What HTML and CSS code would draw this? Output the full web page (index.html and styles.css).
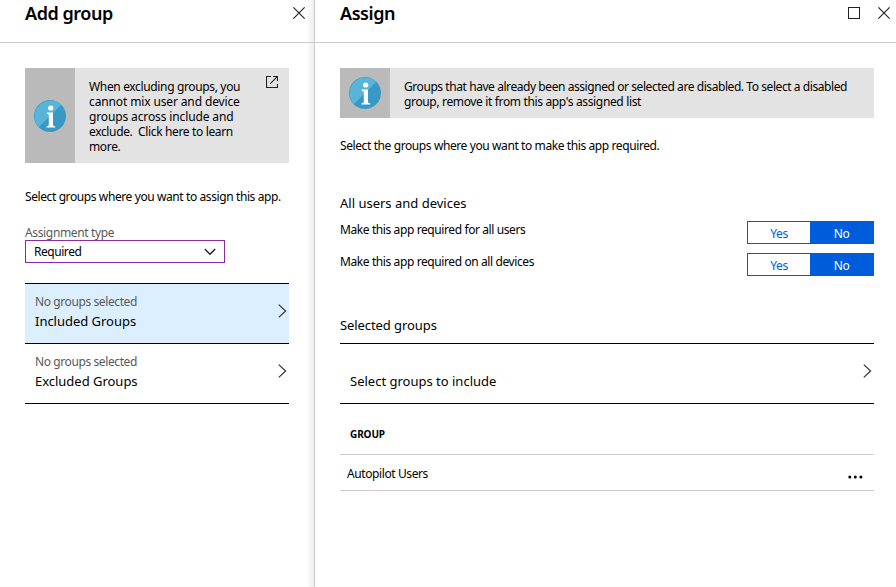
FILE: index.html
```html
<!DOCTYPE html>
<html lang="en">
<head>
<meta charset="utf-8">
<title>Assign</title>
<link rel="stylesheet" href="styles.css">
</head>
<body>
<svg class="defs" width="0" height="0">
  <symbol id="close" viewBox="0 0 12 12"><path d="M.4.4l11.2 11.2M11.6.4L.4 11.6" fill="none" stroke="#222" stroke-width="1.15"/></symbol>
  <symbol id="chevron" viewBox="0 0 9 14"><path d="M.8.6L7.6 7 .8 13.4" fill="none" stroke="#333" stroke-width="1.2"/></symbol>
  <symbol id="info" viewBox="0 0 32 32">
    <circle cx="16" cy="16" r="16" fill="#3999c6"/>
    <path d="M4.7 27.3A16 16 0 0 1 27.3 4.7z" fill="#59b4d9"/>
    <circle cx="16.7" cy="8" r="2.6" fill="#fff"/>
    <path d="M12.800 12.600h6.200v13l2.200.8v1.200h-8.800v-1.200l2.400-.8V14.600L12.800 13.800z" fill="#fff"/>
  </symbol>
</svg>
<main class="blades">
  <section class="blade blade-add">
    <header class="blade-head">
      <h1>Add group</h1>
      <svg class="ic-close"><use href="#close"/></svg>
    </header>
    <div class="blade-body">
      <div class="notice notice-tall">
        <div class="notice-icon"><svg><use href="#info"/></svg></div>
        <p class="notice-text">When excluding groups, you<br><span class="loose">cannot mix user and device<br>groups across include and</span><br>exclude.&nbsp; Click here to learn<br>more.</p>
        <svg class="ic-open" viewBox="0 0 12 12"><path d="M5 .5H.5v11h11V8M7 .5h4.500V5M11.300.7L4.300 7.700" fill="none" stroke="#222" stroke-width="1.1"/></svg>
      </div>
      <p class="intro">Select groups where you want to assign this app.</p>
      <label class="field-label">Assignment type</label>
      <div class="select"><span>Required</span><svg viewBox="0 0 12 8"><path d="M.8 1L6 6.200 11.200 1" fill="none" stroke="#222" stroke-width="1.4"/></svg></div>
      <ul class="picker">
        <li class="active"><div><small>No groups selected</small><b>Included Groups</b></div><svg class="ic-chev"><use href="#chevron"/></svg></li>
        <li><div><small>No groups selected</small><b>Excluded Groups</b></div><svg class="ic-chev"><use href="#chevron"/></svg></li>
      </ul>
    </div>
  </section>
  <section class="blade blade-assign">
    <header class="blade-head">
      <h1>Assign</h1>
      <span class="ic-max"></span>
      <svg class="ic-close"><use href="#close"/></svg>
    </header>
    <div class="blade-body">
      <div class="notice">
        <div class="notice-icon"><svg><use href="#info"/></svg></div>
        <p class="notice-text wide">Groups that have already been assigned or selected are disabled. To select a disabled<br><span class="second">group, remove it from this app's assigned list</span></p>
      </div>
      <p class="intro2">Select the groups where you want to make this app required.</p>
      <h2 class="all">All users and devices</h2>
      <div class="option"><span>Make this app required for all users</span><div class="toggle"><span>Yes</span><span class="on">No</span></div></div>
      <div class="option"><span>Make this app required on all devices</span><div class="toggle"><span>Yes</span><span class="on">No</span></div></div>
      <h2 class="selected">Selected groups</h2>
      <div class="include"><span>Select groups to include</span><svg class="ic-chev"><use href="#chevron"/></svg></div>
      <div class="th">GROUP</div>
      <div class="row"><span>Autopilot Users</span><svg class="dots" viewBox="0 0 15 4"><circle cx="1.800" cy="2" r="1.500"/><circle cx="7.300" cy="2" r="1.500"/><circle cx="12.900" cy="2" r="1.500"/></svg></div>
    </div>
  </section>
</main>
</body>
</html>
```
FILE: styles.css
```css
* { box-sizing: border-box; margin: 0; padding: 0; }
body { width: 896px; height: 587px; overflow: hidden; background: #fff; color: #000; font: 12px/16px "Noto Sans", sans-serif; letter-spacing: -.4px; white-space: nowrap; }
.defs { display: block; height: 0; }
svg { flex: none; display: block; }
.blades { display: flex; height: 587px; }
.blade-add { width: 314px; background: linear-gradient(to left, #efefef, #fff 8px); }
.blade-assign { width: 582px; border-left: 1px solid #ccc; background: #fff; }
.blade-head { display: flex; align-items: flex-start; height: 43px; border-bottom: 1px solid #ccc; padding: 7px 9px 0 25px; }
.blade-assign .blade-head { padding-right: 6px; }
h1 { flex: 1; font-size: 18px; line-height: 12px; font-weight: 600; letter-spacing: -.45px; }
.ic-close { width: 12px; height: 12px; }
.ic-max { width: 12px; height: 12px; border: 1px solid #222; margin-right: 18px; }
.blade-body { padding: 25px 25px 0; }
.blade-assign .blade-body { padding-right: 22px; }
.notice { display: flex; height: 50px; background: #e3e3e3; }
.notice-tall { height: 95px; }
.notice-icon { width: 50px; background: #bababa; display: flex; align-items: center; justify-content: center; }
.notice-icon svg { width: 32px; height: 32px; }
.notice-text { flex: 1; padding: 11px 0 0 14px; line-height: 15px; letter-spacing: -.35px; }
.notice-text .loose { letter-spacing: -.13px; }
.notice-text.wide { letter-spacing: -.43px; }
.notice-text .second { letter-spacing: -.35px; }
.ic-open { width: 12px; height: 12px; margin: 8px 11px 0 0; }
.intro { margin-top: 26px; }
.field-label { display: block; margin-top: 20px; height: 15px; color: #595959; letter-spacing: -.35px; }
.select { display: flex; align-items: center; justify-content: space-between; width: 200px; height: 23px; border: 1px solid #8b2aa5; background: #fff; padding: 1px 8px 0; letter-spacing: -.45px; }
.select svg { width: 12px; height: 8px; }
.picker { list-style: none; margin-top: 20px; border-top: 1px solid #000; }
.picker li { display: flex; justify-content: space-between; height: 60px; border-bottom: 1px solid #000; padding: 10px 2px 0 10px; }
.picker .active { background: #dcefff; }
.picker small { display: block; font-size: 12px; line-height: 16px; color: #595959; }
.picker b { display: block; font-size: 13px; line-height: 18px; font-weight: 400; margin-top: 2px; letter-spacing: -.02px; }
.ic-chev { width: 9px; height: 14px; margin-top: 10px; }
.intro2 { margin-top: 20px; }
h2 { font-size: 13px; line-height: 18px; font-weight: 400; letter-spacing: 0; }
.all { margin: 40px 0 9px; }
.option { display: flex; justify-content: space-between; height: 32px; }
.option > span { padding-top: 1px; }
.toggle { display: flex; width: 127px; height: 23px; border: 1px solid #015cda; line-height: 23px; text-align: center; color: #015cda; }
.toggle span { width: 62px; }
.toggle .on { width: 63px; background: #015cda; color: #fff; }
.selected { margin-top: 31px; height: 27px; letter-spacing: -.08px; }
.include { display: flex; justify-content: space-between; height: 61px; border: solid #000; border-width: 1px 0; padding: 28px 2px 0 10px; font-size: 13px; line-height: 18px; letter-spacing: 0; }
.include .ic-chev { margin-top: -8px; }
.th { height: 51px; border-bottom: 1px solid #ccc; padding: 22px 10px 0; font-size: 10px; line-height: 16px; font-weight: 700; letter-spacing: -.1px; }
.row { display: flex; justify-content: space-between; height: 36px; border-bottom: 1px solid #ccc; padding: 11px 11px 0 7px; }
.dots { width: 15px; height: 4px; margin-top: 9px; }
```
